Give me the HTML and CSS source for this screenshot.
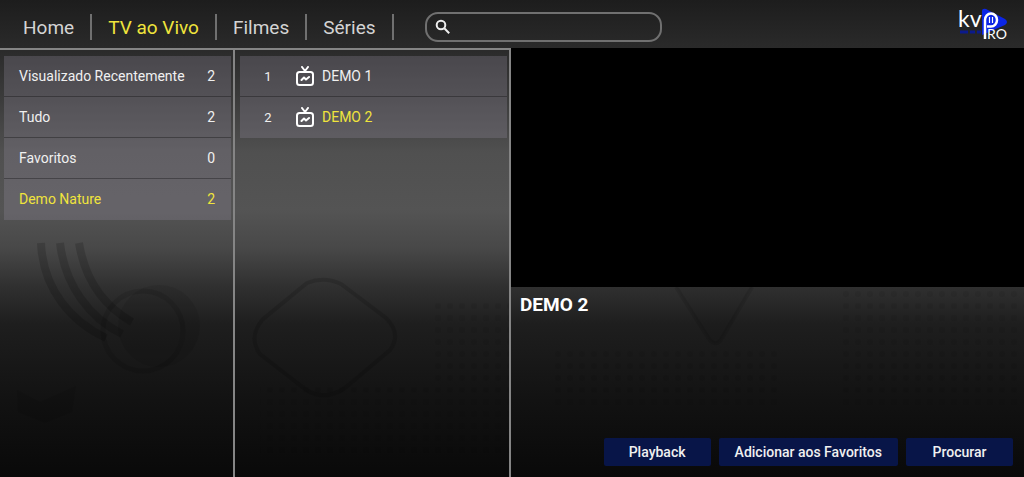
FILE: index.html
```html
<!DOCTYPE html>
<html lang="pt-BR">
<head>
  <meta charset="UTF-8">
  <meta name="viewport" content="width=device-width, initial-scale=1.0">
  <title>TV ao Vivo</title>
  <link rel="stylesheet" href="styles.css">
</head>
<body>

  <!-- Desenhos de fundo -->
  <svg class="fundo" viewBox="0 0 1024 477" preserveAspectRatio="none" aria-hidden="true">
    <defs>
      <pattern id="pontos" width="12" height="12" patternUnits="userSpaceOnUse">
        <circle cx="6" cy="6" r="3" />
      </pattern>
    </defs>
    <g fill="none" stroke="#000" stroke-opacity=".16" stroke-width="8">
      <path d="M41 243C43 290 72 322 106 338" />
      <path d="M60 243C65 286 90 318 122 334" />
      <path d="M79 243C85 280 104 306 132 322" />
      <circle cx="143" cy="331" r="40" stroke-width="5" stroke-opacity=".1" />
    </g>
    <circle cx="159" cy="326" r="41" fill="#000" fill-opacity=".08" />
    <path d="M17 390L40 402L76 386L72 412L45 423L18 412Z" fill="#000" fill-opacity=".08" />
    <path d="M307 283Q324 276 341 284L386 318Q402 334 390 350L345 388Q324 402 305 389L260 354Q248 338 262 320Z" fill="none" stroke="#000" stroke-opacity=".14" stroke-width="4" />
    <path d="M676 287L709 339Q716 348 722 338L752 287" fill="#000" fill-opacity=".04" stroke="#000" stroke-opacity=".1" stroke-width="4" />
    <g fill="url(#pontos)" opacity=".05">
      <rect x="260" y="384" width="250" height="72" />
      <rect x="430" y="300" width="80" height="84" />
      <rect x="552" y="348" width="228" height="60" />
      <rect x="840" y="288" width="184" height="120" />
    </g>
  </svg>

  <header class="topo">
    <nav class="menu">
      <a href="#">Home</a>
      <a href="#" class="ativo">TV ao Vivo</a>
      <a href="#">Filmes</a>
      <a href="#">Séries</a>
    </nav>

    <label class="busca">
      <svg viewBox="0 0 16 16" aria-hidden="true">
        <circle cx="6" cy="6" r="4.3" />
        <path d="M9.300 9.300L14.200 14.200" />
      </svg>
      <input type="search" aria-label="Pesquisar">
    </label>

    <svg class="logo" viewBox="0 0 52 40" role="img" aria-label="kvp PRO">
      <path d="M24 4Q24 1 28 2L47 12Q51 15 47 18L24 28Z" fill="#0b25e6" />
      <path d="M2 25H10M12 25H17M19 25H23" stroke="#0b1a8c" stroke-width="3" />
      <text x="0" y="20" class="logo-kv">kv</text>
      <path d="M27 32V13A6 6.500 0 1 1 33 19.500H29" class="logo-p" />
      <path d="M31.500 10V16M34.500 10V16" stroke="#fff" stroke-width="1.200" />
      <text x="29" y="32" class="logo-ro">RO</text>
    </svg>
  </header>

  <main class="painel">
    <section class="coluna">
      <button class="item"><span class="nome">Visualizado Recentemente</span><span>2</span></button>
      <button class="item"><span class="nome">Tudo</span><span>2</span></button>
      <button class="item"><span class="nome">Favoritos</span><span>0</span></button>
      <button class="item ativo"><span class="nome">Demo Nature</span><span>2</span></button>
    </section>

    <section class="coluna canais">
      <button class="item">
        <span class="numero">1</span>
        <svg class="tv" viewBox="0 0 20 20" aria-hidden="true">
          <rect x="2" y="6" width="16" height="13" rx="2.500" />
          <path d="M7 1L10 5L13 1M6.500 14L9 11.500L11 13.500L14 11" />
        </svg>
        <span class="nome">DEMO 1</span>
      </button>
      <button class="item ativo">
        <span class="numero">2</span>
        <svg class="tv" viewBox="0 0 20 20" aria-hidden="true">
          <rect x="2" y="6" width="16" height="13" rx="2.500" />
          <path d="M7 1L10 5L13 1M6.500 14L9 11.500L11 13.500L14 11" />
        </svg>
        <span class="nome">DEMO 2</span>
      </button>
    </section>

    <section class="player">
      <div class="video"></div>
      <h1>DEMO 2</h1>
      <div class="acoes">
        <button class="botao">Playback</button>
        <button class="botao">Adicionar aos Favoritos</button>
        <button class="botao">Procurar</button>
      </div>
    </section>
  </main>

</body>
</html>
```

FILE: styles.css
```css
:root {
  --amarelo: #f0e43c;
  --azul: #081548;
  --linha: #858585;
  --texto: #f0f0f0;
}

* {
  box-sizing: border-box;
}

body {
  margin: 0;
  min-height: 100vh;
  display: flex;
  flex-direction: column;
  position: relative;
  background: linear-gradient(#1d1d1d 0%, #2a2a2a 10%, #3a3a3a 20%, #505050 32%, #545454 44%, #484848 52%, #303030 60%, #1e1e1e 68%, #121212 84%, #090909 100%);
  font-family: Roboto, "Liberation Sans", sans-serif;
  color: var(--texto);
}

button,
input {
  font: inherit;
  color: inherit;
}

.fundo {
  position: absolute;
  width: 100%;
  height: 100%;
  z-index: -1;
}

/* Topo */
.topo {
  height: 48px;
  display: flex;
  align-items: center;
  padding: 6px 14px 0 7px;
}

.menu {
  display: flex;
}

.menu a {
  padding: 2px 16px 0;
  border-right: 2px solid #707070;
  color: #d4d4d4;
  font-size: 19px;
  line-height: 24px;
  text-decoration: none;
}

.menu a.ativo,
.item.ativo .nome,
.item.ativo .nome + span {
  color: var(--amarelo);
}

.busca {
  width: 237px;
  height: 30px;
  margin-left: 31px;
  padding: 0 8px;
  display: flex;
  align-items: center;
  gap: 8px;
  border: 2px solid #707070;
  border-radius: 13px;
}

.busca svg {
  width: 16px;
  height: 16px;
  fill: none;
  stroke: #eee;
  stroke-width: 2;
}

.busca input {
  flex: 1;
  min-width: 0;
  border: none;
  outline: none;
  background: none;
  font-size: 14px;
}

.logo {
  width: 52px;
  height: 40px;
  margin-left: auto;
  overflow: visible;
}

.logo text {
  fill: #fff;
  font-family: Lato, sans-serif;
}

.logo-kv {
  font-size: 23px;
}

.logo-ro {
  font-size: 14px;
}

.logo-p {
  fill: none;
  stroke: #fff;
  stroke-width: 2.5;
}

/* Colunas */
.painel {
  flex: 1;
  display: grid;
  grid-template-columns: 235px 276px 1fr;
}

.coluna {
  padding: 6px 2px 6px 4px;
  border-top: 2px solid var(--linha);
  border-right: 2px solid var(--linha);
}

.canais {
  padding-left: 5px;
}

.item {
  width: 100%;
  height: 41px;
  padding: 0 16px 0 15px;
  display: flex;
  align-items: center;
  border: none;
  border-bottom: 1px solid rgba(0, 0, 0, 0.3);
  background: rgba(142, 136, 152, 0.3);
  font-size: 14px;
  text-align: left;
  cursor: pointer;
}

.item:last-child {
  border-bottom-color: transparent;
}

.nome {
  flex: 1;
}

.numero {
  width: 26px;
  text-align: center;
  font-size: 13px;
}

.tv {
  width: 20px;
  height: 20px;
  margin: 0 7px 0 14px;
  fill: none;
  stroke: #fff;
  stroke-width: 2;
  stroke-linecap: round;
  stroke-linejoin: round;
}

/* Player */
.player {
  display: flex;
  flex-direction: column;
}

.video {
  aspect-ratio: 15 / 7;
  background: #000;
}

.player h1 {
  margin: 6px 9px;
  font-size: 19px;
  line-height: 24px;
  font-weight: 700;
  color: #fff;
}

.acoes {
  margin-top: auto;
  padding: 11px;
  display: flex;
  justify-content: flex-end;
  gap: 8px;
}

.botao {
  min-width: 107px;
  height: 28px;
  padding: 0 16px;
  border: none;
  border-radius: 2px;
  background: var(--azul);
  font-size: 14px;
  font-weight: 500;
  cursor: pointer;
}
```
